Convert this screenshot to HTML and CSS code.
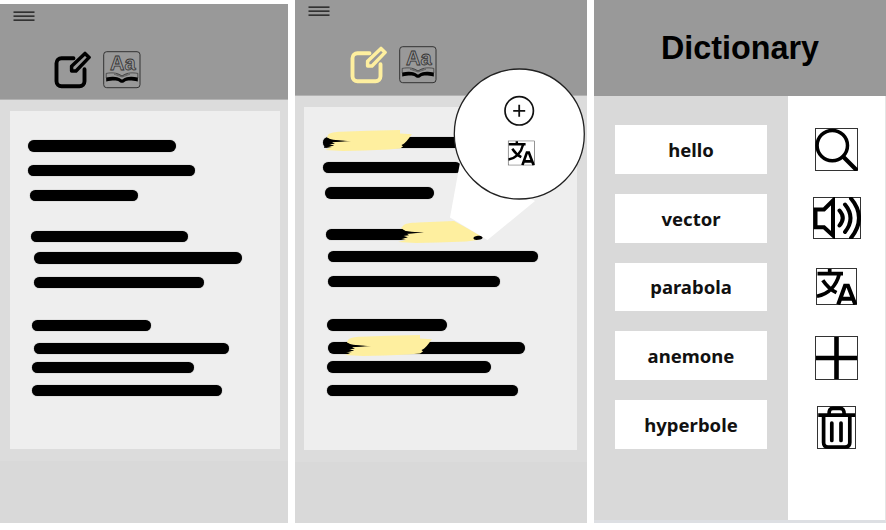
FILE: index.html
```
<!DOCTYPE html>
<html lang="en">
<head>
<meta charset="utf-8">
<title>Reader and dictionary</title>
<link rel="stylesheet" href="styles.css">
</head>
<body>
<svg class="defs" aria-hidden="true">
  <defs>
    <symbol id="menu" viewBox="0 0 22 11"><path d="M.5 1.2h21M.5 5.2h21M.5 9.2h21" fill="none" stroke="#111" stroke-width="1.3"/></symbol>
    <symbol id="edit" viewBox="0 0 38 38">
      <path d="M19.5 7.2H7.5A5 5 0 0 0 2.5 12.2V30.3A5 5 0 0 0 7.5 35.3H25.5A5 5 0 0 0 30.5 30.3V18.3" fill="none" stroke="currentColor" stroke-width="3.9" stroke-linecap="round"/>
      <path d="M17.6 20V15.3L31 2.4L35.1 6.4L22 20Z" fill="none" stroke="currentColor" stroke-width="3.5" stroke-linejoin="round"/>
    </symbol>
    <symbol id="book" viewBox="0 0 38 38">
      <rect x=".7" y=".7" width="36.3" height="36" rx="3" fill="none" stroke="#333" stroke-width="1"/>
      <text x="7" y="19.4" class="letters">Aa</text>
      <path d="M3.2 22.4C10 21.2 15 22 19 25C23 22 28 21.2 34.8 22.4V27C28 25.7 23 26.5 19 29.5C15 26.5 10 25.7 3.2 27Z" fill="none" stroke="#333" stroke-width=".7"/>
      <path d="M11 23.2L19 26L27 23.2M13 22.7L19 25L25 22.7" fill="none" stroke="#333" stroke-width=".5"/>
      <path d="M3.2 26.8C10 25 15.5 25.8 19 28.8C22.5 25.8 28 25 34.8 26.8V30.5C27 28.8 24 29.6 22 30.4C20.5 32.3 17.5 32.3 16 30.4C14 29.6 11 28.8 3.2 30.5Z" fill="#000"/>
    </symbol>
    <symbol id="translate" viewBox="0 0 41 37" preserveAspectRatio="none">
      <rect x=".5" y=".5" width="40" height="36" fill="none" stroke="#333"/>
      <path d="M1.5 5.7H27M13.7 1V5.7M23.3 6C20.5 17 13 26 1 28.2M6.8 12.2C10 17 15 22 20.5 24.7" fill="none" stroke="#000" stroke-width="3.7"/>
      <path d="M22.2 36.5L29 17.8H32L39.3 36.5M24.5 30.8H36.8" fill="none" stroke="#000" stroke-width="4"/>
    </symbol>
    <symbol id="brush" viewBox="0 0 90 22">
      <path d="M5 5C7 2.5 12 2 18 1.8L45 .8L77 0L77 3.5L89 4.2C85 9 83 13 78.5 15L80 16.5L77 18.5L65 19.5L42 20.5L20 21L2 20L7 18.3L3 17.3L11 15.4L5 14L10 11.8L22 11L8 9.5L4 7.5Z" fill="#feef9f"/>
      <path d="M4 8C10 11 18 10.7 28 11L9 12.2L12 13.7L6 14.2L11 15.5L5 16.4L9 17L1 18Z" fill="#000"/>
    </symbol>
  </defs>
</svg>

<main class="board">
  <section class="phone first">
    <header class="bar">
      <svg class="menu"><use href="#menu"/></svg>
      <div class="tools">
        <svg class="tool"><use href="#edit"/></svg>
        <svg class="tool"><use href="#book"/></svg>
      </div>
    </header>
    <div class="desk">
      <div class="paper">
        <i></i><i></i><i></i><i></i><i></i><i></i><i></i><i></i><i></i><i></i>
      </div>
    </div>
  </section>

  <section class="phone second">
    <header class="bar">
      <svg class="menu"><use href="#menu"/></svg>
      <div class="tools">
        <svg class="tool active"><use href="#edit"/></svg>
        <svg class="tool"><use href="#book"/></svg>
      </div>
    </header>
    <div class="desk">
      <div class="paper">
        <i></i><i></i><i></i><i></i><i></i><i></i><i></i><i></i><i></i><i></i>
      </div>
    </div>
    <svg class="mark mark-a"><use href="#brush"/></svg>
    <svg class="mark mark-c"><use href="#brush"/></svg>
    <svg class="callout" viewBox="0 0 190 180">
      <path d="M5 159C7 156.5 12 156 20 155.6L56 154L85 170L80 173L68 174.5L40 175.5L18 176L0 175L8 173L3 172L10 170.2L5 169L9 166.5L22 165.8L8 164.5L3 161Z" fill="#feef9f"/>
      <path d="M2 162C10 165.5 17 165 26 165.4L9 166.7L11 168.3L5 169L9 170.6L3 172L1 173Z" fill="#000"/>
      <ellipse cx="80" cy="170.8" rx="4.6" ry="2" transform="rotate(-8 80 170.8)" fill="#000"/>
      <path d="M63 90L52 150.5L89.5 173L137 134Z" fill="#fff"/>
      <circle cx="121.3" cy="67" r="65" fill="#fff" stroke="#222" stroke-width="1.3"/>
      <circle cx="121.2" cy="43.8" r="14.2" fill="none" stroke="#111" stroke-width="1.7"/>
      <path d="M115.2 43.8H127.2M121.2 37.8V49.8" stroke="#111" stroke-width="1.8"/>
      <use href="#translate" x="109.8" y="73.5" width="27" height="25"/>
    </svg>
  </section>

  <section class="dictionary">
    <header class="title"><h1>Dictionary</h1></header>
    <div class="content">
      <div class="words">
        <div class="word">hello</div>
        <div class="word">vector</div>
        <div class="word">parabola</div>
        <div class="word">anemone</div>
        <div class="word">hyperbole</div>
      </div>
      <nav class="actions">
        <svg class="search" viewBox="0 0 43 43"><rect x=".5" y=".5" width="42" height="42" fill="none" stroke="#333"/><g fill="none" stroke="#000"><circle cx="17.3" cy="17.6" r="15.2" stroke-width="3.5"/><path d="M28 28.5L42 42.5" stroke-width="4.2"/></g></svg>
        <svg class="sound" viewBox="0 0 48 42"><rect x=".5" y=".5" width="47" height="41" fill="none" stroke="#333"/><g fill="none" stroke="#000" stroke-width="4"><path d="M2.5 12.5H11L20 3.5V38.5L11 30.2H2.5Z"/><path d="M26.5 13.5Q33 21 26.5 28.5M32 7.5Q43 21 32 35M38 1.5Q54 20.5 38 41" stroke-linecap="round"/></g></svg>
        <svg class="translate"><use href="#translate"/></svg>
        <svg class="plus" viewBox="0 0 43 44"><rect x=".5" y=".5" width="42" height="43" fill="none" stroke="#333"/><path d="M1 22H42M21.5 1V43" stroke="#000" stroke-width="4.6"/></svg>
        <svg class="trash" viewBox="0 0 39 43"><rect x=".5" y=".5" width="38" height="42" fill="none" stroke="#333"/><g fill="none" stroke="#000" stroke-width="3.7"><path d="M1.2 9.2H38M12 8.5C12 4 13 2.3 16 2.3H23C26 2.3 27.2 4 27.2 8.5M6.6 10V36.5Q6.6 41 11 41H28Q32.8 41 32.8 36.5V10"/><path d="M14.8 17V34.5M24 17V34.5" stroke-linecap="round"/></g></svg>
      </nav>
    </div>
  </section>
</main>
</body>
</html>
```

FILE: styles.css
```
* { box-sizing: border-box; }
body { margin: 0; background: #fff; }
svg { display: block; flex: none; }
.defs { position: absolute; width: 0; height: 0; }

.board {
  display: grid;
  grid-template-columns: 288px 292px 292px;
  column-gap: 7px;
  width: 886px;
  height: 523px;
}

.phone { display: flex; flex-direction: column; background: #d9d9d9; }
.first { margin-top: 4px; }
.second { position: relative; }
.bar { height: 96px; background: #999; border-bottom: 1px solid #b2b2b2; flex: none; }
.first .bar { padding: 7px 0 0 13px; }
.second .bar { padding: 6px 0 0 13px; }
.menu { width: 22px; height: 11px; }
.tools { display: flex; gap: 11px; }
.first .tools { padding: 29px 0 0 41px; }
.second .tools { padding: 29px 0 0 42px; }
.tool { width: 38px; height: 38px; color: #000; }
.tool.active { color: #feef9f; }
.letters {
  font: bold 20px "Liberation Sans", sans-serif;
  fill: none;
  stroke: #333;
  stroke-width: .8px;
}

.desk { background: #dcdcdc; flex: none; }
.first .desk { height: 361px; padding: 11px 8px 0 10px; }
.second .desk { height: 366px; padding: 11px 10px 0 9px; }
.paper {
  display: flex;
  flex-direction: column;
  align-items: flex-start;
  background: #eee;
}
.first .paper { height: 338px; padding: 29px 0 0 18px; }
.second .paper { height: 343px; padding: 30px 0 0 19px; }
.paper i {
  height: 12px;
  flex: none;
  border-radius: 6px;
  background: #000;
  box-shadow: 0 0 1px rgba(0, 0, 0, .6);
}

.first i:nth-child(1) { width: 148px; height: 12px; }
.first i:nth-child(2) { width: 167px; margin: 13px 0 0 0; height: 11px; }
.first i:nth-child(3) { width: 108px; margin: 14px 0 0 2px; height: 11px; }
.first i:nth-child(4) { width: 157px; margin: 30px 0 0 3px; height: 11px; }
.first i:nth-child(5) { width: 208px; margin: 10px 0 0 6px; }
.first i:nth-child(6) { width: 170px; margin: 13px 0 0 6px; height: 11px; }
.first i:nth-child(7) { width: 119px; margin: 32px 0 0 4px; height: 11px; }
.first i:nth-child(8) { width: 195px; margin: 12px 0 0 6px; height: 11px; }
.first i:nth-child(9) { width: 162px; margin: 8px 0 0 4px; height: 11px; }
.first i:nth-child(10) { width: 190px; margin: 12px 0 0 4px; height: 11px; }

.second i:nth-child(1) { width: 150px; height: 11px; }
.second i:nth-child(2) { width: 138px; margin: 14px 0 0 0; height: 11px; }
.second i:nth-child(3) { width: 109px; margin: 14px 0 0 2px; }
.second i:nth-child(4) { width: 110px; margin: 30px 0 0 3px; height: 11px; }
.second i:nth-child(5) { width: 210px; margin: 11px 0 0 5px; height: 11px; }
.second i:nth-child(6) { width: 172px; margin: 14px 0 0 5px; height: 11px; }
.second i:nth-child(7) { width: 120px; margin: 32px 0 0 4px; }
.second i:nth-child(8) { width: 197px; margin: 11px 0 0 5px; }
.second i:nth-child(9) { width: 164px; margin: 7px 0 0 4px; height: 12px; }
.second i:nth-child(10) { width: 191px; margin: 12px 0 0 4px; height: 11px; }

.mark { position: absolute; width: 90px; height: 22px; }
.mark-a { left: 28px; top: 130px; }
.mark-c { left: 48px; top: 335px; }
.callout { position: absolute; left: 103px; top: 67px; width: 190px; height: 180px; }

.dictionary { display: flex; flex-direction: column; }
.title {
  height: 96px;
  background: #999;
  display: flex;
  align-items: center;
  justify-content: center;
}
.title h1 {
  margin: 0;
  color: #000;
  font: bold 32.3px/38px "Liberation Sans", Arial, sans-serif;
}
.content {
  display: flex;
  height: 427px;
  border-bottom: 3px solid #dddfe3;
  border-right: 1px solid #e4e4e4;
}
.words {
  width: 194px;
  padding: 29px 21px 0;
  background: #d9d9d9;
  display: flex;
  flex-direction: column;
  gap: 20px;
}
.word {
  height: 48.8px;
  padding-top: 1px;
  background: #fff;
  display: flex;
  align-items: center;
  justify-content: center;
  color: #111;
  font: 700 18.5px/24px "Noto Sans", sans-serif;
}
.actions {
  flex: 1;
  background: #fff;
  display: flex;
  flex-direction: column;
  align-items: center;
  padding-top: 32px;
}
.search { width: 43px; height: 43px; }
.sound { width: 48px; height: 42px; margin-top: 26px; }
.translate { width: 41px; height: 37px; margin-top: 29px; }
.plus { width: 43px; height: 44px; margin-top: 31px; }
.trash { width: 39px; height: 43px; margin-top: 26px; }
```
